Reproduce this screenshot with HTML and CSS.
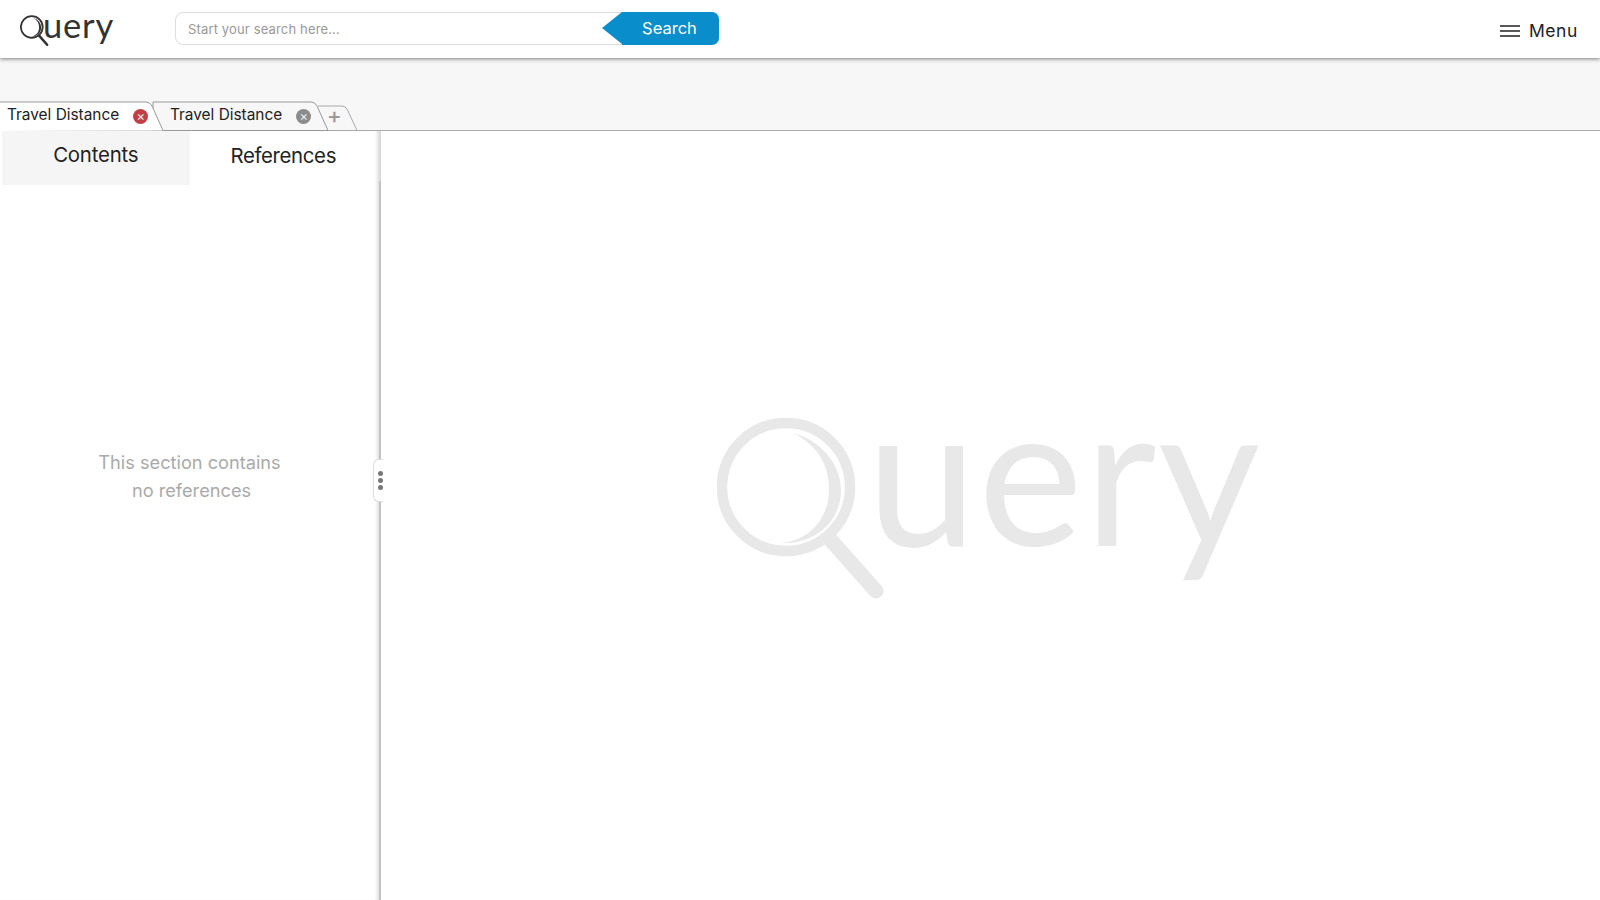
FILE: index.html
```html
<!DOCTYPE html>
<html lang="en">
<head>
<meta charset="utf-8">
<title>Query</title>
<link rel="stylesheet" href="styles.css">
</head>
<body>
<svg class="defs" width="0" height="0" aria-hidden="true">
  <symbol id="lens" viewBox="0 0 170 185">
    <circle cx="69" cy="69" r="64" fill="none" stroke="currentColor" stroke-width="10.5"/>
    <path d="M76 15C105 23 124 47 124 72C124 104 98 127 62 125C92 124 112 100 112 72C112 46 100 27 76 15Z" fill="currentColor"/>
    <path d="M112 120L159 173" fill="none" stroke="currentColor" stroke-width="15" stroke-linecap="round"/>
  </symbol>
</svg>
<header class="topbar">
  <div class="logo">
    <svg class="logo-lens"><use href="#lens"/></svg>
    <span class="logo-text">uery</span>
  </div>
  <form class="search">
    <input class="search-input" type="text" placeholder="Start your search here...">
    <button class="search-button" type="button">Search</button>
  </form>
  <div class="menu">
    <svg class="menu-icon" viewBox="0 0 20 12"><path d="M0 1H20M0 6H20M0 11H20" stroke="currentColor" stroke-width="1.7"/></svg>
    <span>Menu</span>
  </div>
</header>
<div class="tabstrip">
  <div class="tab tab-first">
    <svg class="tab-shape" width="165" height="30"><path d="M-1 30V1H146Q150 1 152 5L163 29.5" fill="#fff" stroke="#999"/></svg>
    <span class="tab-label">Travel Distance</span>
    <span class="tab-close tab-close-red">×</span>
  </div>
  <div class="tab tab-second">
    <svg class="tab-shape" width="176" height="30"><path d="M0 1H158Q162 1 164 5L175 29.5H0Z" fill="#f7f7f7" stroke="#999"/></svg>
    <span class="tab-label">Travel Distance</span>
    <span class="tab-close">×</span>
  </div>
  <div class="tab tab-add">
    <svg class="tab-shape" width="42" height="30"><path d="M0 5H24Q27 5 29 8L39 29.5H10" fill="#f7f7f7" stroke="#aaa"/></svg>
    <span class="tab-plus">+</span>
  </div>
</div>
<div class="workspace">
  <aside class="sidebar">
    <div class="side-tabs">
      <div class="side-tab side-tab-off">Contents</div>
      <div class="side-tab side-tab-on">References</div>
    </div>
    <div class="side-body">
      <p class="empty">This section contains<br><span class="empty-second">no references</span></p>
    </div>
    <div class="grip"><i></i><i></i><i></i></div>
  </aside>
  <main class="stage">
    <div class="watermark">
      <svg class="mark-lens"><use href="#lens"/></svg>
      <span class="mark-text">uery</span>
    </div>
  </main>
</div>
</body>
</html>
```
FILE: styles.css
```css
* { box-sizing: border-box; }
html, body { height: 100%; }
body {
  margin: 0;
  height: 900px;
  overflow: hidden;
  display: flex;
  flex-direction: column;
  font-family: Inter, "Liberation Sans", sans-serif;
  color: #222;
  background: #fff;
}
.defs { position: absolute; }

.topbar {
  position: relative;
  z-index: 2;
  flex: 0 0 58px;
  display: flex;
  align-items: center;
  background: #fff;
  box-shadow: 0 1px 4px rgba(0, 0, 0, .5);
}
.logo {
  flex: 0 0 175px;
  display: flex;
  align-items: flex-start;
  height: 58px;
  padding: 15px 0 0 20px;
  color: #333;
}
.logo-lens { width: 29px; height: 32px; }
.logo-text {
  margin: -6px 0 0 -6px;
  font: 400 34.5px/32px Lato, sans-serif;
  letter-spacing: .8px;
}
.search {
  display: flex;
  width: 544px;
  height: 33px;
  margin-top: -1px;
}
.search-input {
  flex: 1;
  min-width: 0;
  margin-right: -20px;
  padding: 0 12px;
  border: 1.5px solid #ddd;
  border-radius: 8px;
  font: 13px Inter, sans-serif;
  letter-spacing: .15px;
  outline: none;
}
.search-input::placeholder { color: #999; opacity: 1; }
.search-button {
  position: relative;
  flex: 0 0 97px;
  padding: 0 2px 2px 0;
  border: 0;
  border-radius: 0 7px 7px 0;
  background: #0a8dcb;
  color: #fff;
  font: 16.5px Inter, sans-serif;
}
.search-button::before {
  content: "";
  position: absolute;
  right: 100%;
  top: 0;
  border-style: solid;
  border-width: 16.5px 20px 16.5px 0;
  border-color: transparent #0a8dcb transparent transparent;
}
.menu {
  margin-left: auto;
  display: flex;
  align-items: center;
  gap: 9px;
  padding: 3px 22px 0 0;
  font-size: 17.5px;
  letter-spacing: .6px;
}
.menu-icon { width: 20px; height: 12px; }

.tabstrip {
  flex: 0 0 73px;
  display: flex;
  align-items: flex-end;
  background: #f7f7f7;
  border-bottom: 1px solid #aaa;
}
.tab {
  position: relative;
  height: 29px;
  margin-bottom: -1px;
  display: flex;
  align-items: center;
}
.tab-shape { position: absolute; left: 0; bottom: 0; overflow: visible; }
.tab-first { flex: 0 0 153px; z-index: 3; padding-left: 7px; }
.tab-second { flex: 0 0 165px; z-index: 2; padding-left: 17px; }
.tab-add { flex: 0 0 40px; z-index: 1; }
.tab-label {
  position: relative;
  font-size: 15.4px;
  margin-top: -5px;
  white-space: nowrap;
}
.tab-close {
  position: relative;
  width: 15px;
  height: 15px;
  margin-left: 14px;
  border-radius: 50%;
  background: #8c8c8c;
  color: #eee;
  font-size: 13px;
  line-height: 14px;
  text-align: center;
}
.tab-close-red { background: #c04045; }
.tab-plus {
  position: relative;
  margin: -4px 0 0 9px;
  color: #999;
  font-size: 22px;
  font-weight: 500;
  line-height: 1;
}

.workspace { flex: 1; display: flex; min-height: 0; }
.sidebar {
  position: relative;
  flex: 0 0 381px;
  display: flex;
  flex-direction: column;
  box-shadow: inset -6px 0 4px -3px rgba(0, 0, 0, .18);
}
.side-tabs { display: flex; flex: 0 0 54px; padding: 0 4px 0 2px; }
.side-tab {
  flex: 1;
  display: flex;
  justify-content: center;
  padding-top: 11px;
  font-size: 20.4px;
  letter-spacing: -.2px;
}
.side-tab-off { background: #f5f5f5; }
.side-tab-on { padding-top: 12px; letter-spacing: -.35px; }
.side-body {
  flex: 1;
  display: flex;
  justify-content: center;
  margin-top: -4px;
  padding: 267px 0 0;
  border-right: 2px solid #c4c4c4;
}
.empty {
  margin: 0;
  color: #aaa;
  font-size: 18.2px;
  line-height: 28px;
  text-align: center;
}
.empty-second { margin-left: 4px; }
.grip {
  position: absolute;
  right: -2px;
  top: 328px;
  width: 10px;
  height: 43px;
  display: flex;
  flex-direction: column;
  align-items: flex-end;
  justify-content: center;
  gap: 2px;
  background: #fff;
  border: 1px solid #ddd;
  border-right: 0;
  border-radius: 6px 0 0 6px;
}
.grip i { width: 5px; height: 5px; border-radius: 50%; background: #777; }

.stage {
  flex: 1;
  display: flex;
  justify-content: center;
  align-items: center;
  padding: 0 2px 14px 0;
}
.watermark {
  display: flex;
  align-items: flex-start;
  color: #e8e8e8;
}
.mark-lens { width: 170px; height: 185px; margin-top: 4px; }
.mark-text {
  margin: -37px 0 0 -21px;
  font: 400 198px/185px Lato, sans-serif;
  letter-spacing: 1.5px;
}
```
